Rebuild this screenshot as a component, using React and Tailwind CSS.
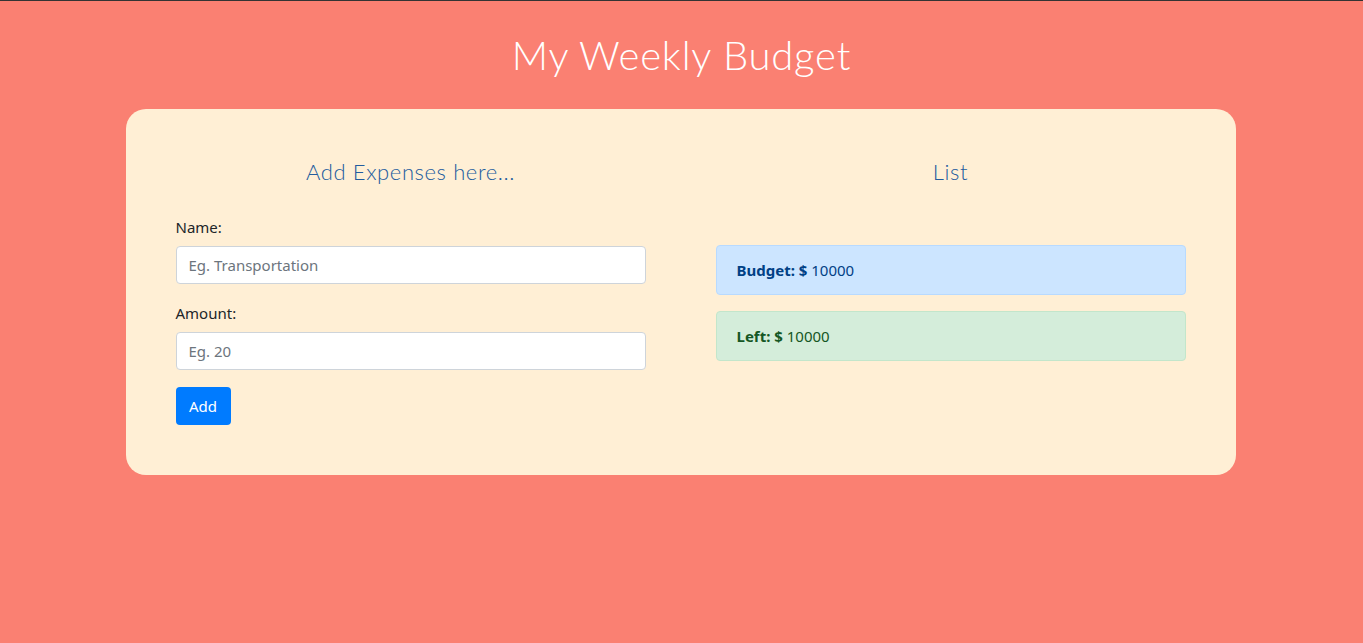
import React, { useState } from 'react';

const App = () => {
  const [name, setName] = useState('');
  const [amount, setAmount] = useState('');
  return (
    <div
      className="min-h-screen bg-[#fa8072] border-t border-[#333] pt-[30px]"
      style={{ fontFamily: '"Noto Sans", sans-serif' }}
    >
      <h1 className="text-center text-white text-[40px] leading-[48px] font-light tracking-[0.8px] font-['Lato',sans-serif]">
        My Weekly Budget
      </h1>

      <div className="mx-auto mt-[30px] w-[1110px] -translate-x-[1px] rounded-[20px] bg-[#ffefd5] px-[50px] pt-[48px] pb-[50px]">
        <div className="grid grid-cols-2 gap-[70px]">
          <div>
            <h2 className="text-center text-[22px] leading-[30px] font-light tracking-[0.6px] text-[#235c9e] font-['Lato',sans-serif] mb-[28px]">
              Add Expenses here...
            </h2>
            <label className="block text-[15px] text-[#212529] leading-[24px] mb-[7px]">Name:</label>
            <input
              value={name}
              onChange={(e) => setName(e.target.value)}
              placeholder="Eg. Transportation"
              className="block w-full h-[38px] rounded-[4px] border border-[#ced4da] bg-white px-[12px] text-[15px] text-[#495057] placeholder:text-[#6c757d] outline-none"
            />
            <label className="block text-[15px] text-[#212529] leading-[24px] mt-[17px] mb-[7px]">Amount:</label>
            <input
              value={amount}
              onChange={(e) => setAmount(e.target.value)}
              placeholder="Eg. 20"
              className="block w-full h-[38px] rounded-[4px] border border-[#ced4da] bg-white px-[12px] text-[15px] text-[#495057] placeholder:text-[#6c757d] outline-none"
            />
            <button
              type="button"
              className="mt-[17px] h-[38px] w-[55px] rounded-[4px] bg-[#007bff] text-white text-[15px]"
            >
              Add
            </button>
          </div>

          <div>
            <h2 className="text-center text-[22px] leading-[30px] font-light tracking-[0.6px] text-[#235c9e] font-['Lato',sans-serif] mb-[58px]">
              List
            </h2>
            <div className="h-[50px] flex items-center rounded-[4px] border border-[#b8daff] bg-[#cce5ff] px-[20px] text-[15px] text-[#004085]">
              <b>Budget: $</b>&nbsp;10000
            </div>
            <div className="mt-[16px] h-[50px] flex items-center rounded-[4px] border border-[#c3e6cb] bg-[#d4edda] px-[20px] text-[15px] text-[#155724]">
              <b>Left: $</b>&nbsp;10000
            </div>
          </div>
        </div>
      </div>
    </div>
  );
};

export default App;
